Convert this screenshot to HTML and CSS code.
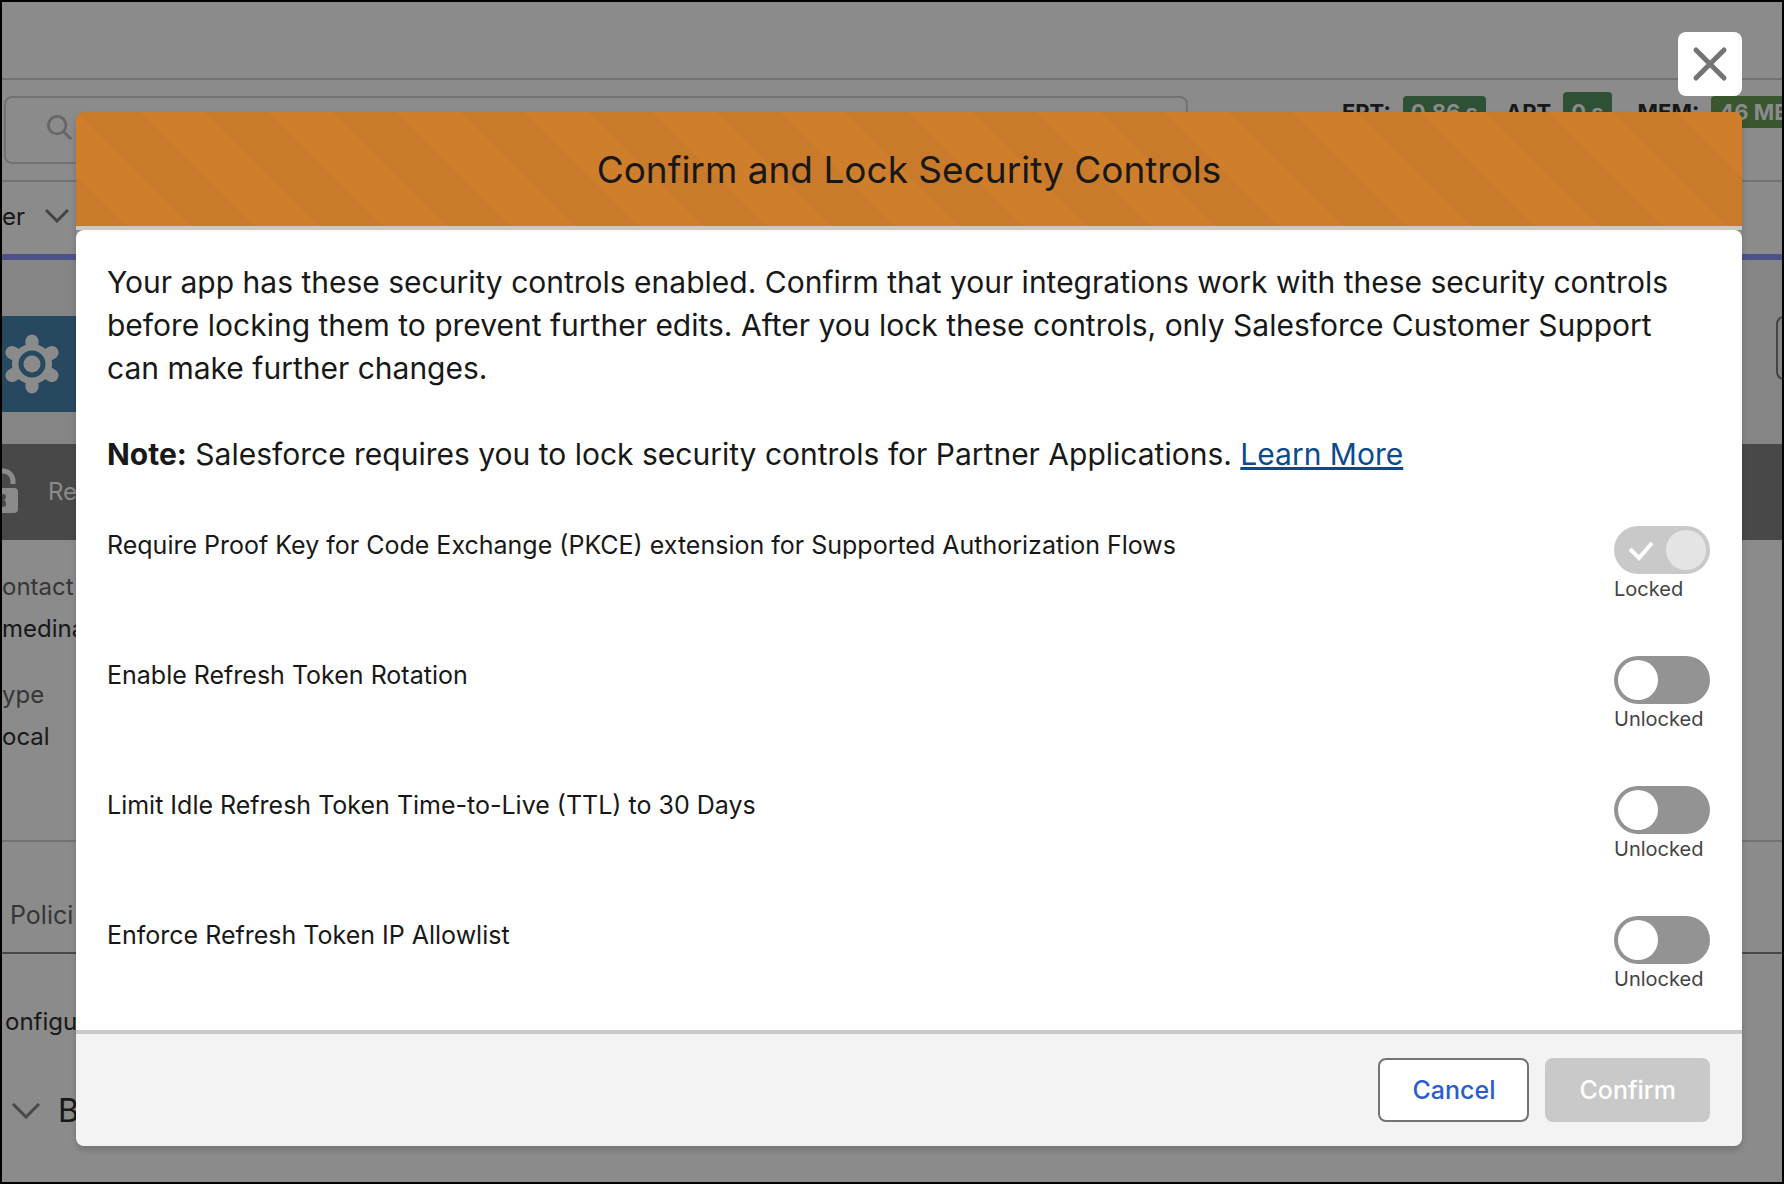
FILE: index.html
```html
<!DOCTYPE html>
<html lang="en">
<head>
    <meta charset="utf-8">
    <title>Confirm and Lock Security Controls</title>
    <link rel="stylesheet" href="styles.css">
</head>
<body>
<div class="app">
    <div class="page">
        <div class="topbar"></div>
        <div class="searchbar">
            <div class="search">
                <svg width="26" height="26" viewBox="0 0 28 28" fill="none" stroke="#666" stroke-width="3"><circle cx="12" cy="12" r="9.5"/><path d="M18.5 18.5L27 27"/></svg>
            </div>
            <div class="stats">
                <b>EPT:</b><span class="badge">0.86 s</span>
                <b>APT</b><span class="badge tall">0 s</span>
                <b>MEM:</b><span class="badge olive">46 MB</span>
            </div>
        </div>
        <div class="nav">
            <span>er</span>
            <svg width="24" height="14" viewBox="0 0 24 14" fill="none" stroke="#444" stroke-width="3"><path d="M1 1L12 12L23 1"/></svg>
        </div>
        <div class="pagehead">
            <div class="appicon">
                <svg width="54" height="60" viewBox="0 0 54 60">
                    <g stroke="#8b8b8b" stroke-width="13" stroke-linecap="round"><path d="M27 7V53M7 18.500L47 41.500M47 18.500L7 41.500"/></g>
                    <circle cx="27" cy="30" r="20" fill="#8b8b8b"/>
                    <circle cx="27" cy="30" r="11" fill="#8b8b8b" stroke="#27495f" stroke-width="5"/>
                </svg>
            </div>
            <div class="outline"></div>
        </div>
        <div class="banner">
            <svg width="17" height="46" viewBox="0 0 17 46"><path d="M-9 20V13a10 10 0 0 1 20 0v3" fill="none" stroke="#8b8b8b" stroke-width="5"/><rect x="-20" y="20" width="36" height="25" rx="4" fill="#8b8b8b"/><path d="M0 26h1q3 0 3 3 0 2-2 3 2 1 2 4 0 3-4 3z" fill="#484848"/></svg>
            <span>Re</span>
        </div>
        <div class="details">
            <div class="name">ontact</div>
            <div class="value">medina</div>
            <div class="name">ype</div>
            <div class="value">ocal</div>
        </div>
        <div class="tabs">Polici</div>
        <div class="configure">onfigu</div>
        <div class="section">
            <svg width="28" height="16" viewBox="0 0 28 16" fill="none" stroke="#484848" stroke-width="3"><path d="M1 1L14 14L27 1"/></svg>
            <span>B</span>
        </div>
    </div>

    <div class="modal" role="dialog" aria-labelledby="modal-title">
        <button class="close" aria-label="Close">
            <svg width="36" height="36" viewBox="0 0 36 36" stroke="#747474" stroke-width="5" stroke-linecap="round"><path d="M4 4L32 32M32 4L4 32"/></svg>
        </button>
        <header><h1 id="modal-title">Confirm and Lock Security Controls</h1></header>
        <main>
            <p>Your app has these security controls enabled. Confirm that your integrations work with these security controls before locking them to prevent further edits. After you lock these controls, only Salesforce Customer Support can make further changes.</p>
            <p><b>Note:</b> Salesforce requires you to lock security controls for Partner Applications. <a href="#">Learn More</a></p>
            <div class="controls">
                <div class="control">
                    <label for="pkce">Require Proof Key for Code Exchange (PKCE) extension for Supported Authorization Flows</label>
                    <div class="switch">
                        <input type="checkbox" id="pkce" checked disabled>
                        <svg class="check" width="26" height="20" viewBox="0 0 26 20" fill="none" stroke="#fff" stroke-width="4"><path d="M2 8L11 17L24 2"/></svg>
                        <span>Locked</span>
                    </div>
                </div>
                <div class="control">
                    <label for="rotation">Enable Refresh Token Rotation</label>
                    <div class="switch">
                        <input type="checkbox" id="rotation">
                        <span>Unlocked</span>
                    </div>
                </div>
                <div class="control">
                    <label for="ttl">Limit Idle Refresh Token Time-to-Live (TTL) to 30 Days</label>
                    <div class="switch">
                        <input type="checkbox" id="ttl">
                        <span>Unlocked</span>
                    </div>
                </div>
                <div class="control">
                    <label for="allowlist">Enforce Refresh Token IP Allowlist</label>
                    <div class="switch">
                        <input type="checkbox" id="allowlist">
                        <span>Unlocked</span>
                    </div>
                </div>
            </div>
        </main>
        <footer>
            <button class="btn">Cancel</button>
            <button class="btn confirm" disabled>Confirm</button>
        </footer>
    </div>
</div>
</body>
</html>
```
FILE: styles.css
```css
* {box-sizing:border-box;}
body {margin:0;font-family:Inter,"Liberation Sans",sans-serif;font-size:24px;color:#181818;}
.app {position:relative;min-height:100vh;border:2px solid #000;background:#8b8b8b;overflow:hidden;}
svg {display:block;flex:none;}

/* page behind the dialog */
.topbar {height:78px;border-bottom:2px solid #737373;}
.searchbar {display:flex;gap:154px;height:102px;padding:16px 0 0 2px;border-bottom:2px solid #737373;}
.search {flex:none;width:1184px;height:68px;padding:16px 40px;border:2px solid #737373;border-radius:8px;}
.stats {display:flex;align-items:flex-start;font-size:22px;line-height:32px;white-space:nowrap;}
.stats b {margin-right:12px;}
.badge {margin-right:20px;padding:0 8px;border-radius:4px;background:#2e5034;color:#8b8b8b;font-weight:bold;}
.tall {margin:-4px 26px 0 0;padding-top:4px;}
.olive {margin-right:0;background:#39562f;}
.nav {display:flex;align-items:center;gap:20px;height:78px;padding-bottom:4px;border-bottom:6px solid #4d528c;}
.pagehead {display:flex;justify-content:space-between;height:184px;padding-top:56px;background:#858585;}
.appicon {width:96px;height:96px;padding:18px 3px;background:#27495f;}
.outline {width:16px;height:64px;margin-right:-10px;border:2px solid #444;border-radius:8px;}
.banner {display:flex;align-items:center;gap:29px;height:96px;padding-bottom:2px;background:#484848;color:#8b8b8b;}
.details {height:302px;padding-top:26px;line-height:42px;border-bottom:2px solid #737373;}
.name {color:#363636;}
.value {margin-bottom:24px;}
.tabs {height:112px;padding:53px 8px 0;font-size:25px;line-height:40px;color:#363636;border-bottom:2px solid #484848;}
.configure {padding:48px 3px;line-height:40px;}
.section {display:flex;align-items:center;gap:18px;padding:1px 10px 0;font-size:32px;line-height:40px;}

/* dialog */
.modal {position:absolute;top:110px;left:74px;right:40px;border-radius:8px;box-shadow:0 4px 6px rgba(0,0,0,.16);}
.close {position:absolute;right:0;bottom:100%;display:flex;align-items:center;justify-content:center;width:64px;height:64px;margin-bottom:16px;padding:0;border:0;border-radius:8px;background:#fff;}
header {height:118px;border-bottom:4px solid #c9c9c9;border-radius:8px 8px 0 0;background:#cf7f2c linear-gradient(45deg,rgba(0,0,0,.03) 25%,transparent 25%,transparent 50%,rgba(0,0,0,.03) 50%,rgba(0,0,0,.03) 75%,transparent 75%) 0 0/128px 128px;}
h1 {margin:0;padding-top:33px;font-size:37px;font-weight:normal;line-height:50px;text-align:center;}
main {padding:31px 32px 0 31px;border-radius:8px 8px 0 0;background:#fff;}
p {margin:0 0 43px;font-size:30px;line-height:43px;}
a {color:#0b4b8c;}
.controls {padding-top:7px;}
.control {display:flex;justify-content:space-between;height:130px;}
.control:last-child {height:114px;}
.control label {padding-top:1px;font-size:25px;line-height:36px;}
.switch {position:relative;width:96px;font-size:20px;line-height:30px;color:#444;}
.switch input {appearance:none;display:block;width:96px;height:48px;margin:0;padding:4px;border-radius:24px;background:#939393;}
.switch input::before {content:"";display:block;width:40px;height:40px;border-radius:50%;background:#fff;}
.switch input:checked {background:#c9c9c9;}
.switch input:checked::before {margin-left:auto;background:#e5e5e5;}
.check {position:absolute;top:15px;left:14px;}
footer {display:flex;justify-content:flex-end;gap:16px;padding:24px 32px;border-top:4px solid #c9c9c9;border-radius:0 0 8px 8px;background:#f3f3f3;}
.btn {height:64px;padding:0 32px;border:2px solid #747474;border-radius:8px;background:#fff;color:#2b5dd1;font:500 25px Inter,"Liberation Sans",sans-serif;}
.confirm {border-color:#c9c9c9;background:#c9c9c9;color:#fff;}
```
